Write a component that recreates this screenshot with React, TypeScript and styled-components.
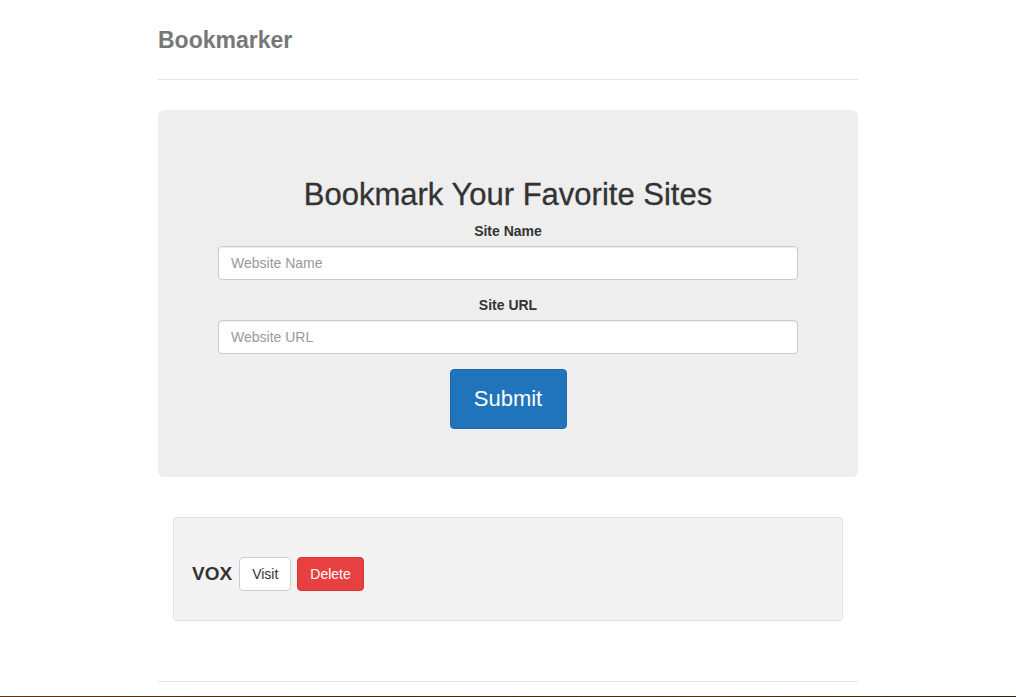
import React from "react";
import styled, { createGlobalStyle } from "styled-components";

const GlobalStyle = createGlobalStyle`
  html, body { margin: 0; padding: 0; background: #fff; }
  body {
    font-family: "Liberation Sans", Arial, Helvetica, sans-serif;
    font-size: 14px;
    line-height: 1.42857;
    color: #333;
  }
  * { box-sizing: border-box; }
`;

const Page = styled.div`
  min-height: 100vh;
  display: flex;
  flex-direction: column;
`;

const Container = styled.div`
  flex: 1;
  width: 700px;
  margin: 0 auto;
  padding-top: 20px;
`;

const Header = styled.header`
  padding-bottom: 19px;
  border-bottom: 1px solid #e5e5e5;
  margin-bottom: 30px;
`;

const Brand = styled.h3`
  margin: 0;
  font-size: 23px;
  font-weight: 700;
  line-height: 40px;
  color: #777;
`;

const Jumbotron = styled.section`
  background: #eeeeee;
  border-radius: 6px;
  padding: 48px 60px;
  text-align: center;
`;

const Title = styled.h2`
  margin: 20px 0 10px;
  font-size: 31px;
  font-weight: 500;
  line-height: 33px;
  color: #333;
  -webkit-text-stroke: 0.3px #333;
`;

const FormGroup = styled.div`
  margin-bottom: 15px;
`;

const Label = styled.label`
  display: block;
  font-weight: 700;
  font-size: 14px;
  line-height: 20px;
  margin-bottom: 5px;
`;

const Input = styled.input`
  display: block;
  width: 100%;
  height: 34px;
  padding: 6px 12px;
  font-family: inherit;
  font-size: 14px;
  color: #555;
  background: #fff;
  border: 1px solid #ccc;
  border-radius: 4px;
  box-shadow: inset 0 1px 1px rgba(0, 0, 0, 0.075);
  &::placeholder { color: #999; }
`;

const SubmitButton = styled.button`
  width: 117px;
  height: 60px;
  font-family: inherit;
  font-size: 22px;
  color: #fff;
  background: #1f74bb;
  border: 1px solid #1c6aab;
  border-radius: 4px;
  cursor: pointer;
`;

const Marketing = styled.section`
  margin: 40px 15px;
  display: flow-root;
`;

const Well = styled.div`
  background: #f3f3f3;
  border: 1px solid #e1e1e1;
  border-radius: 4px;
  padding: 19px 18px;
  margin-bottom: 20px;
`;

const Item = styled.h3`
  margin: 20px 0 10px;
  display: flex;
  align-items: center;
  gap: 6px;
  font-size: 19px;
  font-weight: 700;
  line-height: 34px;
  color: #333;
`;

const Name = styled.span`
  margin-right: 1px;
`;

const Btn = styled.a<{ $variant: "default" | "danger" }>`
  display: inline-block;
  height: 34px;
  padding: 6px 12px;
  font-size: 14px;
  font-weight: 400;
  line-height: 20px;
  border-radius: 4px;
  text-decoration: none;
  cursor: pointer;
  color: ${(p) => (p.$variant === "danger" ? "#fff" : "#333")};
  background: ${(p) => (p.$variant === "danger" ? "#e84040" : "#fff")};
  border: 1px solid ${(p) => (p.$variant === "danger" ? "#d63636" : "#ccc")};
`;

const Footer = styled.footer`
  border-top: 1px solid #e5e5e5;
  padding-top: 14px;
`;

const BottomStrip = styled.div`
  height: 2px;
  background: linear-gradient(90deg, #5a3510, #3a2a10 40%, #4a3312 70%, #2a2418);
`;

export default function App() {
  return (
    <Page>
      <GlobalStyle />
      <Container>
        <Header>
          <Brand>Bookmarker</Brand>
        </Header>
        <Jumbotron>
          <Title>Bookmark Your Favorite Sites</Title>
          <form onSubmit={(e) => e.preventDefault()}>
            <FormGroup>
              <Label>Site Name</Label>
              <Input type="text" placeholder="Website Name" />
            </FormGroup>
            <FormGroup>
              <Label>Site URL</Label>
              <Input type="text" placeholder="Website URL" />
            </FormGroup>
            <SubmitButton type="submit">Submit</SubmitButton>
          </form>
        </Jumbotron>
        <Marketing>
          <Well>
            <Item>
              <Name>VOX</Name>
              <Btn $variant="default">Visit</Btn>
              <Btn $variant="danger">Delete</Btn>
            </Item>
          </Well>
        </Marketing>
        <Footer />
      </Container>
      <BottomStrip />
    </Page>
  );
}
